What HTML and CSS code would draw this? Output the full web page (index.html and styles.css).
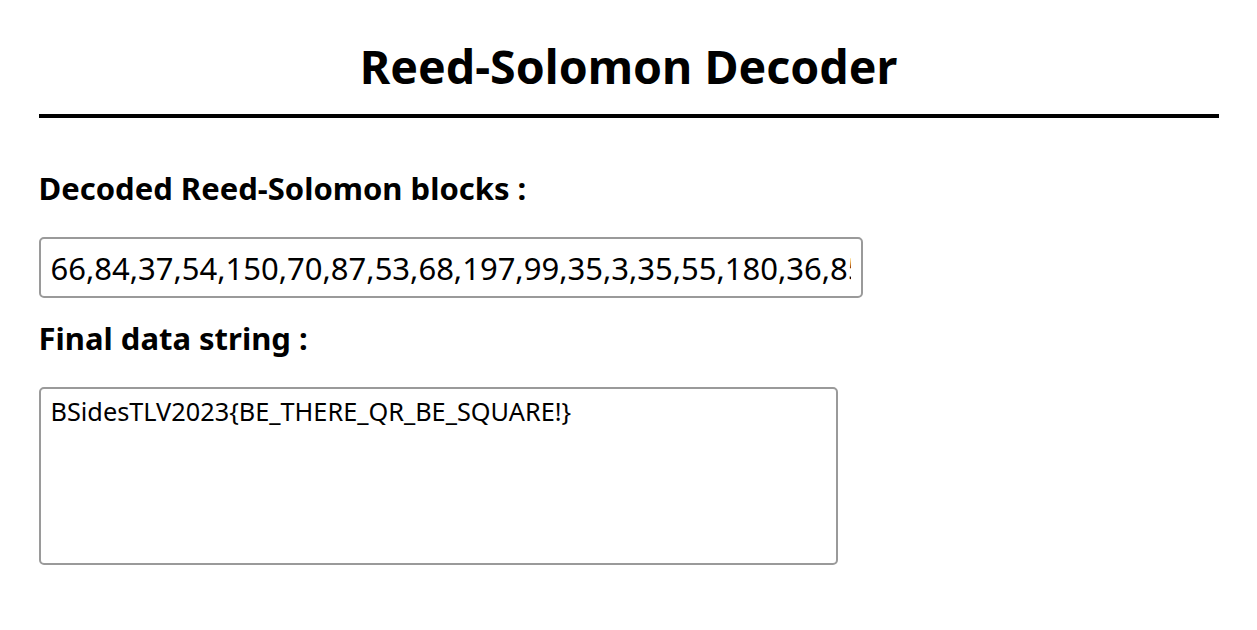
FILE: index.html
```html
<!DOCTYPE html>
<html>
<head>
<meta charset="utf-8">
<link rel="stylesheet" href="styles.css">
</head>
<body>
<main class="page">
  <h1 class="title">Reed-Solomon Decoder</h1>
  <hr class="rule">
  <section class="field">
    <label class="label" for="blocks">Decoded Reed-Solomon blocks :</label>
    <input id="blocks" class="blocks" type="text" value="66,84,37,54,150,70,87,53,68,197,99,35,3,35,55,180,36,85,50,51,123,66,69,95,84,72,69,82,69,95,81,82,95,66,69,95,83,81,85,65,82,69,33,125">
  </section>
  <section class="field">
    <label class="label" for="final">Final data string :</label>
    <textarea id="final" class="final">BSidesTLV2023{BE_THERE_QR_BE_SQUARE!}</textarea>
  </section>
</main>
</body>
</html>
```

FILE: styles.css
```css
html, body {
  margin: 0;
  padding: 0;
  background: #fff;
}
body {
  font-family: "Noto Sans", "Open Sans", sans-serif;
  color: #000;
}
.page {
  max-width: 1180px;
  margin: 0 auto;
  padding-top: 36px;
}
.title {
  margin: 0;
  text-align: center;
  font-size: 46.5px;
  font-weight: 700;
  line-height: 60px;
}
.rule {
  margin: 18px 0 0;
  border: none;
  height: 4px;
  background: #000;
}
.field {
  display: flex;
  flex-direction: column;
  align-items: flex-start;
}
.label {
  font-size: 31px;
  font-weight: 700;
  line-height: 40px;
  margin-top: 50px;
  margin-bottom: 29px;
}
.field + .field .label {
  margin-top: 20px;
}
.blocks {
  box-sizing: border-box;
  width: 824px;
  height: 61px;
  border: 2px solid #9a9a9a;
  border-radius: 5px;
  padding: 0 10px;
  font-family: "Noto Sans", "Open Sans", sans-serif;
  font-size: 31px;
  color: #000;
  outline: none;
}
.final {
  box-sizing: border-box;
  width: 799px;
  height: 178px;
  border: 2px solid #9a9a9a;
  border-radius: 5px;
  padding: 6px 10px;
  font-family: "Noto Sans", "Open Sans", sans-serif;
  font-size: 25.3px;
  line-height: 1.3;
  color: #000;
  resize: none;
  outline: none;
}
```
